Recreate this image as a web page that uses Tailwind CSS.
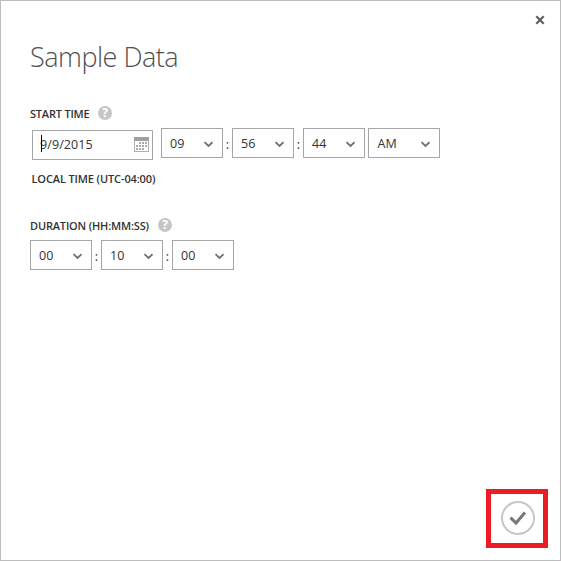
<!DOCTYPE html>
<html lang="en">
<head>
<meta charset="utf-8">
<title>Sample Data</title>
<script src="https://cdn.jsdelivr.net/npm/@tailwindcss/browser@4"></script>
</head>
<body class="bg-white">
<svg class="hidden">
  <symbol id="chev" viewBox="0 0 10 7"><path d="M1.5 1.2 L5.5 5 L9.5 1.2" fill="none" stroke="#707070" stroke-width="1.8"/></symbol>
</svg>
<main class="relative flex h-[561px] w-[561px] flex-col border border-[#bdbdbd] bg-white pl-[29px] font-['Open_Sans','Noto_Sans',sans-serif] text-[#333]">
  <button class="absolute top-[14px] right-[15px] h-[10px] w-[10px]" aria-label="Close">
    <svg class="block h-[10px] w-[10px]" viewBox="0 0 10 10"><path d="M1.3 1.3 L8.7 8.7 M8.7 1.3 L1.3 8.7" stroke="#606060" stroke-width="2.3"/></svg>
  </button>
  <h1 class="mt-[36px] h-[40px] text-[27px] leading-[40px] font-light tracking-[-0.5px] whitespace-nowrap text-[#505050]">Sample Data</h1>

  <div class="mt-[28px] flex h-[16px] items-center gap-[8px]">
    <span class="w-[60px] pt-[2px] text-[11px] leading-[16px] font-semibold tracking-[-0.2px] whitespace-nowrap">START TIME</span>
    <span class="flex h-[14px] w-[14px] items-center justify-center rounded-full bg-[#c6c6c6] text-[12px] leading-[14px] font-bold text-white">?</span>
  </div>
  <div class="mt-[7px] flex h-[34px] text-[12.5px]">
    <div class="mt-[2px] ml-[2px] flex h-[30px] w-[121px] items-center justify-between border border-[#a6a6a6] pr-[3px] pl-[7px]">
      <span class="relative leading-[18px] tracking-[0.1px]">9/9/2015<i class="absolute top-[-1px] left-[1px] h-[17px] w-px bg-black"></i></span>
      <svg class="mb-[2px] h-[15px] w-[15px]" viewBox="0 0 15 15" shape-rendering="crispEdges"><path d="M0 0h15v4h-15z" fill="#a0a0a0"/><path d="M.5 4v10.5h14V4" fill="none" stroke="#b0b0b0"/><path d="M5 5h2v2H5zM8 5h2v2H8zM11 5h2v2h-2zM2 8h2v2H2zM5 8h2v2H5zM8 8h2v2H8zM11 8h2v2h-2zM2 11h2v2H2zM5 11h2v2H5zM8 11h2v2H8z" fill="#aaa"/></svg>
    </div>
    <div class="ml-[8px] flex h-[30px] w-[62px] items-center justify-between border border-[#a6a6a6] pr-[9px] pl-[8px]"><span class="pt-[2px]">09</span><svg class="mt-[2px] h-[7px] w-[10px]"><use href="#chev"/></svg></div>
    <span class="w-[9px] pt-[8px] text-center leading-[18px]">:</span>
    <div class="flex h-[30px] w-[62px] items-center justify-between border border-[#a6a6a6] pr-[9px] pl-[8px]"><span class="pt-[2px]">56</span><svg class="mt-[2px] h-[7px] w-[10px]"><use href="#chev"/></svg></div>
    <span class="w-[9px] pt-[8px] text-center leading-[18px]">:</span>
    <div class="flex h-[30px] w-[62px] items-center justify-between border border-[#a6a6a6] pr-[9px] pl-[8px]"><span class="pt-[2px]">44</span><svg class="mt-[2px] h-[7px] w-[10px]"><use href="#chev"/></svg></div>
    <div class="ml-[3px] flex h-[30px] w-[72px] items-center justify-between border border-[#a6a6a6] pr-[9px] pl-[8.5px]"><span class="pt-[2px]">AM</span><svg class="mt-[2px] h-[7px] w-[10px]"><use href="#chev"/></svg></div>
  </div>
  <div class="mt-[9px] ml-[1.5px] h-[16px] text-[11px] leading-[16px] font-semibold tracking-[-0.12px] whitespace-nowrap">LOCAL TIME (UTC-04:00)</div>

  <div class="mt-[30px] flex h-[16px] items-center gap-[8px]">
    <span class="w-[120px] pt-[2px] text-[11px] leading-[16px] font-semibold tracking-[-0.17px] whitespace-nowrap">DURATION (HH:MM:SS)</span>
    <span class="flex h-[14px] w-[14px] items-center justify-center rounded-full bg-[#c6c6c6] text-[12px] leading-[14px] font-bold text-white">?</span>
  </div>
  <div class="mt-[7px] flex h-[30px] text-[12.5px]">
    <div class="flex h-[30px] w-[62px] items-center justify-between border border-[#a6a6a6] pr-[9px] pl-[8px]"><span class="pt-[2px]">00</span><svg class="mt-[2px] h-[7px] w-[10px]"><use href="#chev"/></svg></div>
    <span class="w-[9px] pt-[8px] text-center leading-[18px]">:</span>
    <div class="flex h-[30px] w-[62px] items-center justify-between border border-[#a6a6a6] pr-[9px] pl-[8px]"><span class="pt-[2px]">10</span><svg class="mt-[2px] h-[7px] w-[10px]"><use href="#chev"/></svg></div>
    <span class="w-[9px] pt-[8px] text-center leading-[18px]">:</span>
    <div class="flex h-[30px] w-[62px] items-center justify-between border border-[#a6a6a6] pr-[9px] pl-[8px]"><span class="pt-[2px]">00</span><svg class="mt-[2px] h-[7px] w-[10px]"><use href="#chev"/></svg></div>
  </div>

  <button class="mt-auto mr-[12px] mb-[12px] flex h-[59px] w-[62px] items-center justify-center self-end border-[5px] border-[#ed1c24]" aria-label="Done">
    <svg class="mb-[2px] ml-[2px] h-[34px] w-[34px]" viewBox="0 0 34 34"><circle cx="17" cy="17" r="16" fill="none" stroke="#c6c6c6" stroke-width="2"/><path d="M9.5 16.7 L15 22 L24 11.5" fill="none" stroke="#777" stroke-width="3"/></svg>
  </button>
</main>
</body>
</html>
